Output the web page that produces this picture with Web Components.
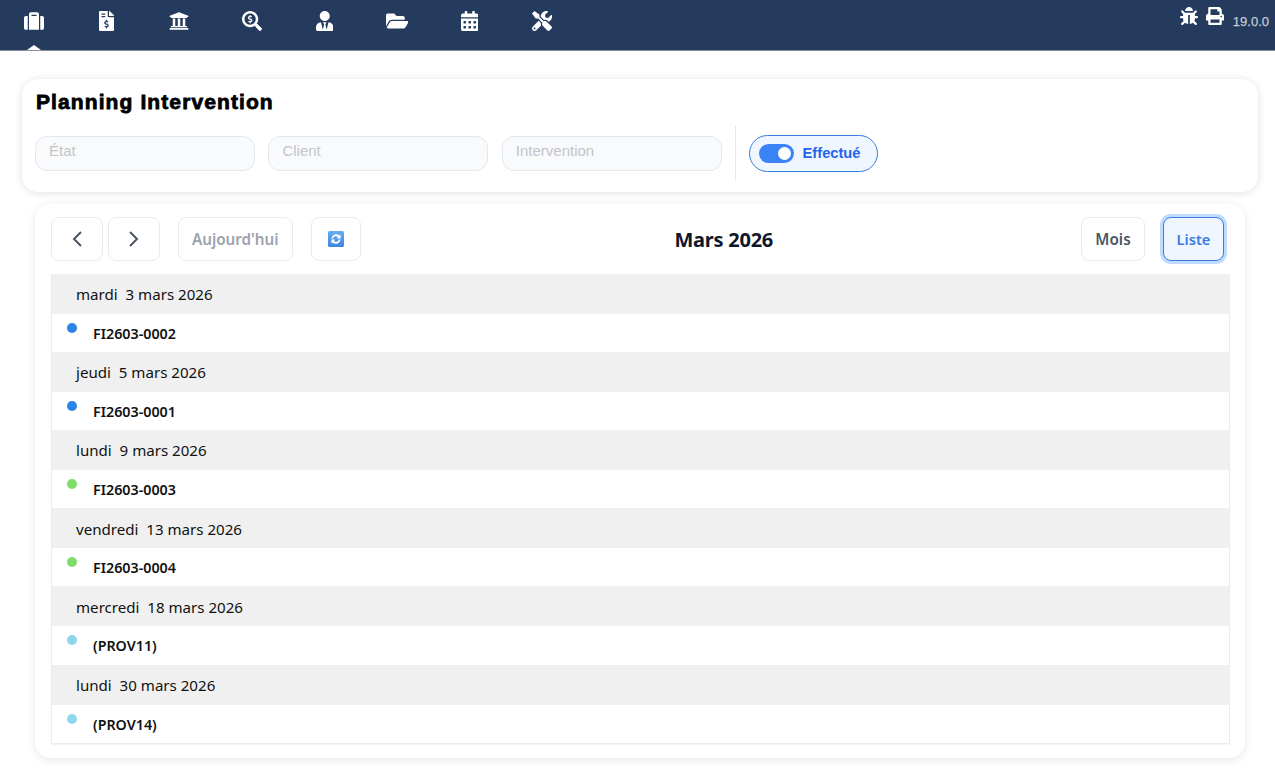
<!DOCTYPE html>
<html lang="fr">
<head>
<meta charset="utf-8">
<title>Planning Intervention</title>
<style>
  html, body { margin: 0; height: 775px; overflow: hidden; background: #fff; }
  body { font-family: "Noto Sans", "Open Sans", sans-serif; }
</style>
</head>
<body>
<top-bar></top-bar>
<filter-card>
  <filter-field>État</filter-field>
  <filter-field>Client</filter-field>
  <filter-field>Intervention</filter-field>
  <separator-line></separator-line>
  <state-toggle>Effectué</state-toggle>
</filter-card>
<calendar-card>
  <list-day date="mardi&nbsp;&nbsp;3 mars 2026" ref="FI2603-0002" dot="#2a84e6"></list-day>
  <list-day date="jeudi&nbsp;&nbsp;5 mars 2026" ref="FI2603-0001" dot="#2a84e6"></list-day>
  <list-day date="lundi&nbsp;&nbsp;9 mars 2026" ref="FI2603-0003" dot="#7fdc6a"></list-day>
  <list-day date="vendredi&nbsp;&nbsp;13 mars 2026" ref="FI2603-0004" dot="#7fdc6a"></list-day>
  <list-day date="mercredi&nbsp;&nbsp;18 mars 2026" ref="(PROV11)" dot="#8ed6ea"></list-day>
  <list-day date="lundi&nbsp;&nbsp;30 mars 2026" ref="(PROV14)" dot="#8ed6ea"></list-day>
</calendar-card>

<script>
const ICONS = {
  suitcase: ['0 0 512 512', 'M128 480h256V80c0-26.5-21.5-48-48-48H176c-26.5 0-48 21.5-48 48v400zm64-384h128v32H192V96zm320 80v256c0 26.5-21.5 48-48 48h-48V128h48c26.5 0 48 21.5 48 48zM96 480H48c-26.5 0-48-21.5-48-48V176c0-26.5 21.5-48 48-48h48v352z'],
  invoice: ['0 0 384 512', 'M377 105L279.1 7c-4.5-4.5-10.6-7-17-7H256v128h128v-6.1c0-6.3-2.5-12.4-7-16.9zm-153 31V0H24C10.7 0 0 10.7 0 24v464c0 13.3 10.7 24 24 24h336c13.3 0 24-10.7 24-24V160H248c-13.2 0-24-10.8-24-24zM64 72c0-4.42 3.58-8 8-8h80c4.42 0 8 3.58 8 8v16c0 4.42-3.58 8-8 8H72c-4.42 0-8-3.58-8-8V72zm0 80v-16c0-4.42 3.58-8 8-8h80c4.42 0 8 3.58 8 8v16c0 4.42-3.58 8-8 8H72c-4.42 0-8-3.58-8-8zm144 263.88V440c0 4.42-3.58 8-8 8h-16c-4.42 0-8-3.58-8-8v-24.29c-11.29-.58-22.27-4.52-31.37-11.35-3.9-2.93-4.1-8.77-.57-12.14l11.75-11.21c2.77-2.64 6.89-2.76 10.13-.73 3.87 2.42 8.26 3.72 12.82 3.72h28.11c6.5 0 11.8-5.92 11.8-13.19 0-5.95-3.61-11.19-8.77-12.73l-45-13.5c-18.59-5.58-31.58-23.42-31.58-43.39 0-24.52 19.05-44.44 42.67-45.07V232c0-4.42 3.58-8 8-8h16c4.42 0 8 3.58 8 8v24.29c11.29.58 22.27 4.51 31.37 11.35 3.9 2.93 4.1 8.77.57 12.14l-11.75 11.21c-2.77 2.64-6.89 2.76-10.13.73-3.87-2.43-8.26-3.72-12.82-3.72h-28.11c-6.5 0-11.8 5.92-11.8 13.19 0 5.95 3.61 11.19 8.77 12.73l45 13.5c18.59 5.58 31.58 23.42 31.58 43.39 0 24.53-19.05 44.44-42.67 45.07z'],
  bank: ['0 0 512 512', 'M496 128v16a8 8 0 0 1-8 8h-24v12c0 6.627-5.373 12-12 12H60c-6.627 0-12-5.373-12-12v-12H24a8 8 0 0 1-8-8v-16a8 8 0 0 1 4.941-7.392l232-88a7.996 7.996 0 0 1 6.118 0l232 88A8 8 0 0 1 496 128zm-24 304H40c-13.255 0-24 10.745-24 24v16a8 8 0 0 0 8 8h464a8 8 0 0 0 8-8v-16c0-13.255-10.745-24-24-24zM96 192v192H60c-6.627 0-12 5.373-12 12v20h416v-20c0-6.627-5.373-12-12-12h-36V192h-64v192h-64V192h-64v192h-64V192H96z'],
  search: ['0 0 512 512', 'M505.04 442.66l-99.71-99.69c-4.5-4.5-10.6-7-17-7h-16.3c27.6-35.3 44-79.69 44-127.99C416.03 93.09 322.92 0 208.02 0S0 93.09 0 207.98s93.11 207.98 208.02 207.98c48.3 0 92.71-16.4 128.01-44v16.3c0 6.4 2.5 12.5 7 17l99.71 99.69c9.4 9.4 24.6 9.4 33.9 0l28.3-28.3c9.4-9.4 9.4-24.6.1-34zM208.02 351.97c-79.54 0-144-64.34-144-143.99 0-79.53 64.35-143.99 144-143.99 79.54 0 144 64.34 144 143.99 0 79.53-64.35 143.99-144 143.99zm27.11-152.54l-45.01-13.5c-5.16-1.55-8.77-6.78-8.77-12.73 0-7.27 5.3-13.19 11.8-13.19h28.11c4.56 0 8.96 1.29 12.82 3.72 3.24 2.03 7.36 1.91 10.13-.73l11.75-11.21c3.53-3.37 3.33-9.21-.57-12.14-9.1-6.83-20.08-10.77-31.37-11.35V112c0-4.42-3.58-8-8-8h-16c-4.42 0-8 3.58-8 8v16.12c-23.63.63-42.68 20.55-42.68 45.07 0 19.97 12.99 37.81 31.58 43.39l45.01 13.5c5.16 1.55 8.77 6.78 8.77 12.73 0 7.27-5.3 13.19-11.8 13.19h-28.11c-4.56 0-8.96-1.29-12.82-3.72-3.24-2.03-7.36-1.91-10.13.73l-11.75 11.21c-3.53 3.37-3.33 9.21.57 12.14 9.1 6.83 20.08 10.77 31.37 11.35V304c0 4.42 3.58 8 8 8h16c4.42 0 8-3.58 8-8v-16.12c23.63-.63 42.68-20.54 42.68-45.07 0-19.97-12.99-37.81-31.58-43.38z'],
  user: ['0 0 448 512', 'M224 256c70.7 0 128-57.3 128-128S294.7 0 224 0 96 57.3 96 128s57.3 128 128 128zm95.8 32.6L272 480l-32-136 32-56h-96l32 56-32 136-47.8-191.4C56.9 292 0 350.3 0 422.4V464c0 26.5 21.5 48 48 48h352c26.5 0 48-21.5 48-48v-41.6c0-72.1-56.9-130.4-128.2-133.8z'],
  folder: ['0 0 576 512', 'M572.694 292.093L500.27 416.248A63.997 63.997 0 0 1 444.989 448H45.025c-18.523 0-30.064-20.093-20.731-36.093l72.424-124.155A64 64 0 0 1 152 256h399.964c18.523 0 30.064 20.093 20.73 36.093zM152 224h328v-48c0-26.51-21.49-48-48-48H272l-64-64H48C21.49 64 0 85.49 0 112v278.046l69.077-118.418C86.214 242.25 117.989 224 152 224z'],
  calendar: ['0 0 448 512', 'M0 464c0 26.5 21.5 48 48 48h352c26.5 0 48-21.5 48-48V192H0v272zm320-196c0-6.6 5.4-12 12-12h40c6.6 0 12 5.4 12 12v40c0 6.6-5.4 12-12 12h-40c-6.6 0-12-5.4-12-12v-40zm0 128c0-6.6 5.4-12 12-12h40c6.6 0 12 5.4 12 12v40c0 6.6-5.4 12-12 12h-40c-6.6 0-12-5.4-12-12v-40zM192 268c0-6.6 5.4-12 12-12h40c6.6 0 12 5.4 12 12v40c0 6.6-5.4 12-12 12h-40c-6.6 0-12-5.4-12-12v-40zm0 128c0-6.6 5.4-12 12-12h40c6.6 0 12 5.4 12 12v40c0 6.6-5.4 12-12 12h-40c-6.6 0-12-5.4-12-12v-40zM64 268c0-6.6 5.4-12 12-12h40c6.6 0 12 5.4 12 12v40c0 6.6-5.4 12-12 12H76c-6.6 0-12-5.4-12-12v-40zm0 128c0-6.6 5.4-12 12-12h40c6.6 0 12 5.4 12 12v40c0 6.6-5.4 12-12 12H76c-6.6 0-12-5.4-12-12v-40zM400 64h-48V16c0-8.8-7.2-16-16-16h-32c-8.8 0-16 7.2-16 16v48H160V16c0-8.8-7.2-16-16-16h-32c-8.8 0-16 7.2-16 16v48H48C21.5 64 0 85.5 0 112v48h448v-48c0-26.5-21.5-48-48-48z'],
  tools: ['0 0 512 512', 'M501.1 395.7L384 278.6c-23.1-23.1-57.6-27.6-85.4-13.9L192 158.1V96L64 0 0 64l96 128h62.1l106.6 106.6c-13.6 27.8-9.2 62.3 13.9 85.4l117.1 117.1c14.6 14.6 38.2 14.6 52.7 0l52.7-52.7c14.5-14.6 14.5-38.2 0-52.7zM331.7 225c28.3 0 54.9 11 74.9 31l19.4 19.4c15.8-6.9 30.8-16.5 43.8-29.5 37.1-37.1 49.7-89.3 37.9-136.7-2.2-9-13.5-12.1-20.1-5.5l-74.4 74.4-67.9-11.3L334 98.9l74.4-74.4c6.6-6.6 3.4-17.9-5.7-20.2-47.4-11.7-99.6.9-136.6 37.9-28.5 28.5-41.9 66.1-41.2 103.6l82.1 82.1c8.1-1.9 16.5-2.9 24.7-2.9zm-103.9 82l-56.7-56.7L18.7 402.8c-25 25-25 65.5 0 90.5s65.5 25 90.5 0l123.6-123.6c-7.6-19.9-9.9-41.6-5-62.7zM64 472c-13.2 0-24-10.8-24-24 0-13.3 10.7-24 24-24s24 10.7 24 24c0 13.2-10.7 24-24 24z'],
  bug: ['0 0 512 512', 'M511.988 288.9c-.478 17.43-15.217 31.1-32.653 31.1H424v16c0 21.864-4.882 42.584-13.6 61.145l60.228 60.228c12.496 12.497 12.496 32.758 0 45.255-12.498 12.497-32.759 12.496-45.256 0l-54.736-54.736C345.886 467.965 314.351 480 280 480V236c0-6.627-5.373-12-12-12h-24c-6.627 0-12 5.373-12 12v244c-34.351 0-65.886-12.035-90.636-32.108l-54.736 54.736c-12.498 12.497-32.759 12.496-45.256 0-12.496-12.497-12.496-32.758 0-45.255l60.228-60.228C92.882 378.584 88 357.864 88 336v-16H32.666C15.23 320 .491 306.33.013 288.9-.484 270.816 14.028 256 32 256h56v-58.745l-46.628-46.628c-12.496-12.497-12.496-32.758 0-45.255 12.498-12.497 32.758-12.497 45.256 0L141.255 160h229.489l54.627-54.627c12.498-12.497 32.758-12.497 45.256 0 12.496 12.497 12.496 32.758 0 45.255L424 197.255V256h56c17.972 0 32.484 14.816 31.988 32.9zM257 0c-61.856 0-112 50.144-112 112h224C369 50.144 318.856 0 257 0z'],
  print: ['0 0 512 512', 'M448 192V77.25c0-8.49-3.37-16.62-9.37-22.63L393.37 9.37c-6-6-14.14-9.37-22.63-9.37H96C78.33 0 64 14.33 64 32v160c-35.35 0-64 28.65-64 64v112c0 8.84 7.16 16 16 16h48v96c0 17.67 14.33 32 32 32h320c17.67 0 32-14.33 32-32v-96h48c8.84 0 16-7.16 16-16V256c0-35.35-28.65-64-64-64zm-64 256H128v-96h256v96zm0-224H128V64h192v48c0 8.84 7.16 16 16 16h48v96zm48 72c-13.25 0-24-10.75-24-24 0-13.26 10.75-24 24-24s24 10.74 24 24c0 13.25-10.75 24-24 24z']
};

function icon(name, h) {
  const [box, d] = ICONS[name];
  return `<svg viewBox="${box}" height="${h}" fill="currentColor" aria-hidden="true"><path d="${d}"/></svg>`;
}

class TopBar extends HTMLElement {
  connectedCallback() {
    this.attachShadow({ mode: 'open' });
    const left = ['suitcase', 'invoice', 'bank', 'search', 'user', 'folder', 'calendar', 'tools'];
    this.shadowRoot.innerHTML = `
      <style>
        :host { display: flex; justify-content: space-between; height: 50px; background: #253b5e; border-bottom: 1px solid #8a8f96; color: #fff; font-family: "Liberation Sans", Arial, sans-serif; }
        nav { display: flex; margin-left: -2px; }
        a { position: relative; width: 72.5px; display: flex; align-items: flex-start; justify-content: center; padding-top: 11px; box-sizing: border-box; }
        svg { display: block; }
        a.on::after { content: ""; position: absolute; left: 50%; bottom: 0; margin-left: -7px; border: 7px solid transparent; border-top: 0; border-bottom: 5px solid #fff; }
        .tools { display: flex; align-items: flex-start; padding: 7px 6px 0 0; }
        .tools svg + svg { margin-left: 8px; }
        .version { font-size: 13px; font-weight: 400; -webkit-text-stroke: .25px #c4cad3; color: #c4cad3; margin: 7px 0 0 9px; }
      </style>
      <nav>${left.map((n, i) => `<a class="${i ? '' : 'on'}">${icon(n, 20)}</a>`).join('')}</nav>
      <div class="tools">${icon('bug', 18)}${icon('print', 18)}<span class="version">19.0.0</span></div>`;
  }
}

class FilterCard extends HTMLElement {
  connectedCallback() {
    this.attachShadow({ mode: 'open' });
    this.shadowRoot.innerHTML = `
      <style>
        :host { display: block; margin: 28px 17px 0 22px; height: 113px; box-sizing: border-box; padding: 10px 13px; background: #fff; border-radius: 16px; box-shadow: 0 1px 8px rgba(0, 0, 0, .12); }
        h1 { margin: 0 0 11px 1px; font: 700 21px/25px "Liberation Sans", Arial, sans-serif; letter-spacing: 1.1px; -webkit-text-stroke: .8px #000; color: #000; }
        .row { display: flex; align-items: center; gap: 13.4px; height: 56px; }
      </style>
      <h1>Planning Intervention</h1>
      <div class="row"><slot></slot></div>`;
  }
}

class FilterField extends HTMLElement {
  connectedCallback() {
    this.attachShadow({ mode: 'open' });
    this.shadowRoot.innerHTML = `
      <style>
        :host { display: block; width: 220px; height: 35px; box-sizing: border-box; padding: 5px 13px; background: #f8fafc; border: 1px solid #e2e8f0; border-radius: 12px; font: 15px/18px "Liberation Sans", Arial, sans-serif; color: #c3c5c9; }
      </style><slot></slot>`;
  }
}

class SeparatorLine extends HTMLElement {
  connectedCallback() {
    this.attachShadow({ mode: 'open' });
    this.shadowRoot.innerHTML = `<style>:host { display: block; width: 1px; height: 55px; background: #e5e7eb; }</style>`;
  }
}

class StateToggle extends HTMLElement {
  connectedCallback() {
    this.attachShadow({ mode: 'open' });
    this.shadowRoot.innerHTML = `
      <style>
        :host { display: flex; align-items: center; gap: 9px; height: 37px; width: 129px; margin-left: -1px; box-sizing: border-box; padding: 0 0 0 9px; background: #eff6ff; border: 1px solid #3b7ddd; border-radius: 19px; font: 700 14.7px "Liberation Sans", Arial, sans-serif; color: #2563eb; }
        .track { width: 35px; height: 19px; border-radius: 10px; background: #3b82f6; position: relative; }
        .track::after { content: ""; position: absolute; right: 3px; top: 3px; width: 13px; height: 13px; border-radius: 50%; background: #fff; }
      </style>
      <span class="track"></span><slot></slot>`;
  }
}

class CalButton extends HTMLElement {
  connectedCallback() {
    this.attachShadow({ mode: 'open' });
    this.shadowRoot.innerHTML = `
      <style>
        :host { display: flex; align-items: center; justify-content: center; height: 44px; box-sizing: border-box; padding: 0 13px; border: 1px solid #e9ebee; border-radius: 8px; background: #fff; font: 600 15.2px "Noto Sans", "Open Sans", sans-serif; color: #4b5563; }
        :host([muted]) { color: #9ca3af; }
        :host([active]) { background: #eff6ff; color: #3b7ddd; border-color: #3b7ddd; box-shadow: 0 0 0 3px #bfdbfe; }
      </style><slot></slot>`;
  }
}

class CalendarCard extends HTMLElement {
  connectedCallback() {
    this.attachShadow({ mode: 'open' });
    this.shadowRoot.innerHTML = `
      <style>
        :host { display: block; margin: 12px 30px 0 35px; height: 554px; box-sizing: border-box; padding: 13px 15px 15px 16px; background: #fff; border-radius: 16px; box-shadow: 0 2px 10px rgba(0, 0, 0, .1); }
        header { display: flex; align-items: center; height: 44px; margin-bottom: 13px; }
        .arrow { display: block; }
        h2 { flex: 1; margin: 0; text-align: center; font: 700 20px "Noto Sans", "Open Sans", sans-serif; color: #0f172a; letter-spacing: -.25px; padding-left: 6px; }
        .list { border: 1px solid #ececec; border-top: 0; box-shadow: 0 1px 1px rgba(0, 0, 0, .04); }
      </style>
      <header>
        <cal-button style="width:52px;padding:0"><svg class="arrow" width="12" height="18" viewBox="0 0 12 18" fill="none" stroke="#4b5563" stroke-width="2"><path d="M10 2L3 9l7 7"/></svg></cal-button>
        <cal-button style="width:52px;padding:0;margin-left:5px"><svg class="arrow" width="12" height="18" viewBox="0 0 12 18" fill="none" stroke="#4b5563" stroke-width="2"><path d="M2 2l7 7-7 7"/></svg></cal-button>
        <cal-button muted style="margin-left:18px">Aujourd'hui</cal-button>
        <cal-button style="width:50px;padding:0;margin-left:18px"><svg width="16" height="16" viewBox="0 0 16 16"><defs><linearGradient id="refresh" x1="0" y1="0" x2="0" y2="1"><stop offset="0" stop-color="#66adf2"/><stop offset="1" stop-color="#3f86e0"/></linearGradient></defs><rect width="16" height="16" rx="1.5" fill="url(#refresh)"/><path d="M3.4 7.4A4.7 4.7 0 0 1 11.3 4.6L12.6 3.4V7.4H8.7L10 6A3 3 0 0 0 5 7.4zM12.6 8.6A4.7 4.7 0 0 1 4.7 11.4L3.4 12.6V8.6H7.3L6 10A3 3 0 0 0 11 8.6z" fill="#fff"/></svg></cal-button>
        <h2>Mars 2026</h2>
        <cal-button style="width:64px;padding:0">Mois</cal-button>
        <cal-button active style="width:61px;padding:0;margin:0 6px 0 18px;font-size:14.6px">Liste</cal-button>
      </header>
      <div class="list"><slot></slot></div>`;
  }
}

class ListDay extends HTMLElement {
  connectedCallback() {
    this.attachShadow({ mode: 'open' });
    this.shadowRoot.innerHTML = `
      <style>
        :host { display: block; font-family: "Noto Sans", "Open Sans", sans-serif; color: #111; }
        .date { height: 40px; box-sizing: border-box; padding: .5px 24px 0; display: flex; align-items: center; background: #f0f0f0; font-size: 15.1px; }
        .event { height: 38.12px; box-sizing: border-box; padding-left: 15px; display: flex; align-items: flex-start; background: #fff; }
        .dot { width: 10px; height: 10px; border-radius: 50%; margin-top: 9px; }
        .ref { margin: 10px 0 0 16px; font-size: 14.3px; line-height: 19px; font-weight: 600; }
      </style>
      <div class="date">${this.getAttribute('date')}</div>
      <div class="event"><span class="dot" style="background:${this.getAttribute('dot')}"></span><span class="ref">${this.getAttribute('ref')}</span></div>`;
  }
}

customElements.define('top-bar', TopBar);
customElements.define('filter-card', FilterCard);
customElements.define('filter-field', FilterField);
customElements.define('separator-line', SeparatorLine);
customElements.define('state-toggle', StateToggle);
customElements.define('cal-button', CalButton);
customElements.define('calendar-card', CalendarCard);
customElements.define('list-day', ListDay);
</script>
</body>
</html>
